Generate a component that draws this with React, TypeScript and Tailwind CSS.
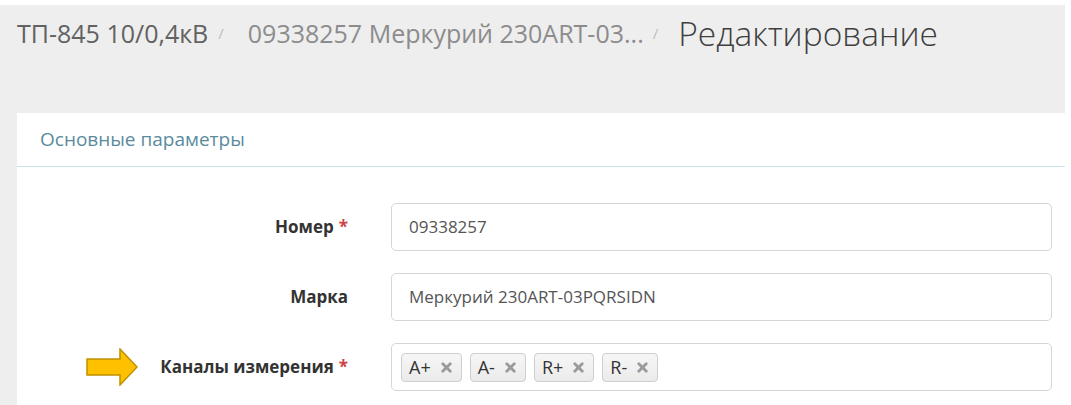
import { X } from 'lucide-react';

interface Field {
  label: string;
  required?: boolean;
  value?: string;
  tags?: string[];
  marked?: boolean;
}

const fields: Field[] = [
  { label: 'Номер', required: true, value: '09338257' },
  { label: 'Марка', value: 'Меркурий 230ART-03PQRSIDN' },
  { label: 'Каналы измерения', required: true, tags: ['A+', 'A-', 'R+', 'R-'], marked: true },
];

function Arrow() {
  return (
    <svg width="52" height="38" viewBox="0 0 52 38" className="shrink-0">
      <path
        d="M1 11 H34 V1 L51 19 L34 37 V27 H1 Z"
        fill="#ffc000"
        stroke="#bf9000"
        strokeWidth="1.5"
        strokeLinejoin="miter"
      />
    </svg>
  );
}

export default function App() {
  return (
    <div className="w-[1071px] h-[405px] overflow-hidden bg-white pt-[5px] pr-[6px] font-['Open_Sans',sans-serif]">
      <div className="h-full bg-[#eeeeee] flex flex-col">
        <div className="h-[108px] shrink-0 flex items-end px-[17px] pb-[64px] whitespace-nowrap">
          <span className="text-[25px] leading-[32px] text-[#626262]">ТП-845 10/0,4кВ</span>
          <span className="text-[15px] leading-[32px] text-[#bdbdbd] ml-[10px] mr-[24px]">/</span>
          <span className="text-[25px] leading-[32px] text-[#8c8c8c]">09338257 Меркурий 230ART-03...</span>
          <span className="text-[15px] leading-[32px] text-[#bdbdbd] ml-[9px] mr-[20px]">/</span>
          <span className="text-[33.5px] leading-[32px] font-light text-[#3f3f3f]">Редактирование</span>
        </div>

        <div className="flex-1 ml-[17px] bg-white">
          <div className="h-[54px] flex items-center pl-[23px] border-b border-[#c9e3ed]">
            <span className="text-[19px] text-[#5a8b9d]">Основные параметры</span>
          </div>

          <div className="pt-[36px] pr-[13px] flex flex-col gap-[22px]">
            {fields.map((f) => (
              <div key={f.label} className="flex items-center">
                <div className="w-[331px] shrink-0 flex items-center justify-end">
                  {f.marked && (
                    <div className="mr-[22px]">
                      <Arrow />
                    </div>
                  )}
                  <span className="text-[17px] font-bold text-[#333333]">{f.label}</span>
                  {f.required && (
                    <span className="text-[17px] font-bold text-[#cc4444] ml-[5px]">*</span>
                  )}
                </div>
                <div className="ml-[43px] flex-1 h-[48px] rounded-[5px] border-[1.5px] border-[#d6d6d6] flex items-center">
                  {f.value && (
                    <span className="pl-[17px] text-[17px] text-[#555555]">{f.value}</span>
                  )}
                  {f.tags && (
                    <div className="pl-[9px] flex items-center gap-[8px]">
                      {f.tags.map((t) => (
                        <span
                          key={t}
                          className="h-[29px] flex items-center pl-[7px] pr-[7px] gap-[8px] rounded-[4px] border border-[#cfcfcf] bg-gradient-to-b from-[#f6f6f6] to-[#ebebeb] text-[18px] text-[#333333]"
                        >
                          {t}
                          <X className="w-[15px] h-[15px] text-[#9a9a9a]" strokeWidth={4.5} />
                        </span>
                      ))}
                    </div>
                  )}
                </div>
              </div>
            ))}
          </div>
        </div>
      </div>
    </div>
  );
}
